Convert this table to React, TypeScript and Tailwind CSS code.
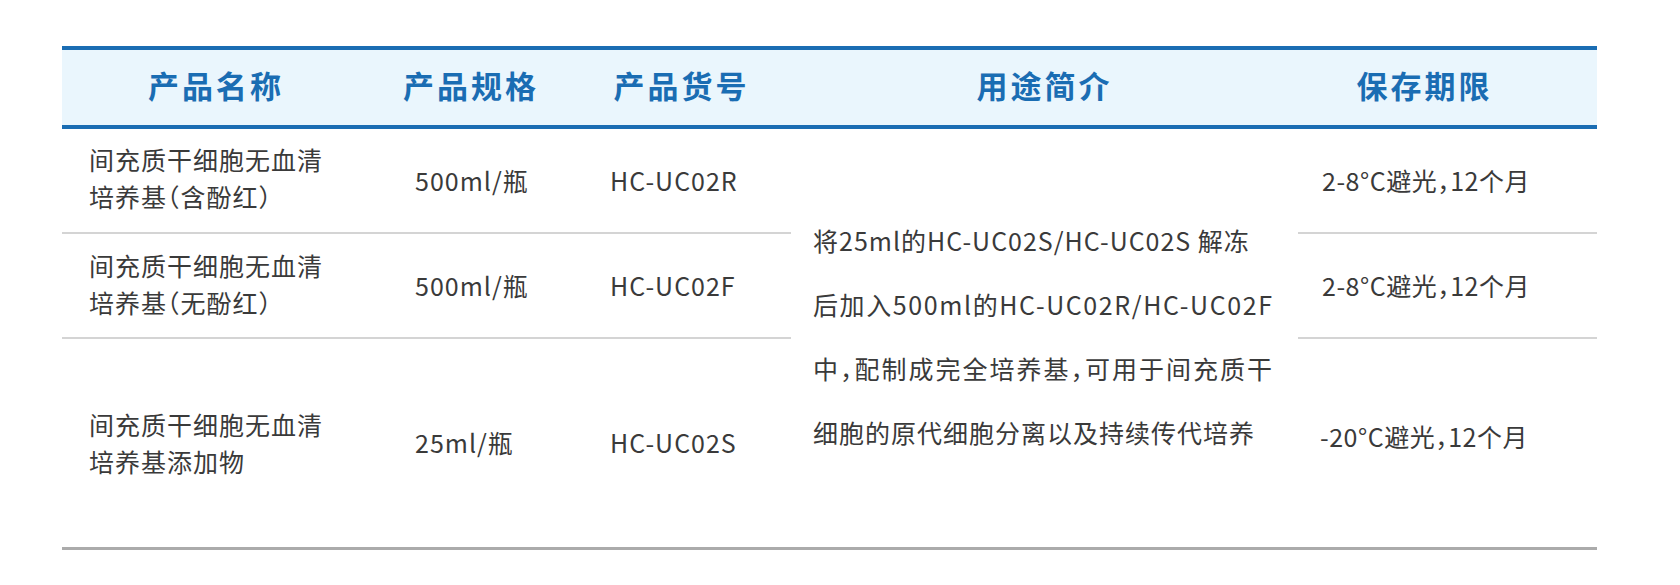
import type { ReactNode } from 'react'

const font = { fontFamily: '"Noto Sans CJK SC", "Noto Sans", sans-serif' }

const headers = [
  { text: '产品名称', cls: '' },
  { text: '产品规格', cls: '' },
  { text: '产品货号', cls: '' },
  { text: '用途简介', cls: '' },
  { text: '保存期限', cls: 'pr-[46px]' },
]

// 半角化的全角标点
const Half = ({ c }: { c: string }) => <span className="[font-feature-settings:'halt']">{c}</span>

const products: { name: ReactNode; spec: string; code: string; pad: string }[] = [
  {
    name: (
      <>
        <div>间充质干细胞无血清</div>
        <div>
          培养基<Half c="（" />含酚红<Half c="）" />
        </div>
      </>
    ),
    spec: '500ml/瓶',
    code: 'HC-UC02R',
    pad: 'pb-[6px]',
  },
  {
    name: (
      <>
        <div>间充质干细胞无血清</div>
        <div>
          培养基<Half c="（" />无酚红<Half c="）" />
        </div>
      </>
    ),
    spec: '500ml/瓶',
    code: 'HC-UC02F',
    pad: 'pb-[4px]',
  },
  {
    name: (
      <>
        <div>间充质干细胞无血清</div>
        <div>培养基添加物</div>
      </>
    ),
    spec: '25ml/瓶',
    code: 'HC-UC02S',
    pad: 'pb-0',
  },
]

export default function App() {
  return (
    <div className="w-[1680px] h-[585px] bg-white pt-[46px] pl-[62px]" style={font}>
      <div className="w-[1535px]">
        {/* 表头 */}
        <div className="grid grid-cols-[308px_202px_219px_507px_299px] h-[83px] border-y-4 border-[#1a6db3] bg-[#eaf6fd] text-[#1a6db3] text-[31px] font-bold tracking-[3px]">
          {headers.map((h) => (
            <div key={h.text} className={`flex items-center justify-center pb-[5px] ${h.cls}`}>
              {h.text}
            </div>
          ))}
        </div>

        {/* 表体 */}
        <div className="grid grid-cols-[308px_202px_219px_507px_299px] grid-rows-[105px_105px_208px] border-b-[3px] border-[#ababab] text-[#3a3a3a] text-[25px] tracking-[1px]">
          {products.map((p, i) => {
            const line = i < 2 ? 'border-b-2 border-[#d4d4d4]' : ''
            const row = i === 0 ? 'row-start-1' : i === 1 ? 'row-start-2' : 'row-start-3'
            return [
              <div key={`n${i}`} className={`col-start-1 ${row} ${line} ${p.pad} flex flex-col justify-center pl-[27px] leading-[37px]`}>
                {p.name}
              </div>,
              <div key={`s${i}`} className={`col-start-2 ${row} ${line} flex items-center pl-[45px]`}>
                {p.spec}
              </div>,
              <div key={`c${i}`} className={`col-start-3 ${row} ${line} flex items-center pl-[38px]`}>
                {p.code}
              </div>,
            ]
          })}

          <div className="col-start-4 row-start-1 row-span-3 flex flex-col justify-center pl-[22px] pb-[4px] leading-[64px] whitespace-nowrap">
            <div>将25ml的HC-UC02S/HC-UC02S 解冻</div>
            <div className="tracking-[1.6px]">后加入500ml的HC-UC02R/HC-UC02F</div>
            <div className="w-[460px] text-justify [text-align-last:justify]">
              中<Half c="，" />配制成完全培养基<Half c="，" />可用于间充质干
            </div>
            <div>细胞的原代细胞分离以及持续传代培养</div>
          </div>

          <div className="col-start-5 row-start-1 border-b-2 border-[#d4d4d4] flex items-center pl-[24px] tracking-[0.5px]">
            <span>
              2-8°C避光<Half c="，" />12个月
            </span>
          </div>
          <div className="col-start-5 row-start-2 border-b-2 border-[#d4d4d4] flex items-center pl-[24px] tracking-[0.5px]">
            <span>
              2-8°C避光<Half c="，" />12个月
            </span>
          </div>
          <div className="col-start-5 row-start-3 flex items-center pl-[22px] pb-[12px] tracking-[0.5px]">
            <span>
              -20°C避光<Half c="，" />12个月
            </span>
          </div>
        </div>
      </div>
    </div>
  )
}
